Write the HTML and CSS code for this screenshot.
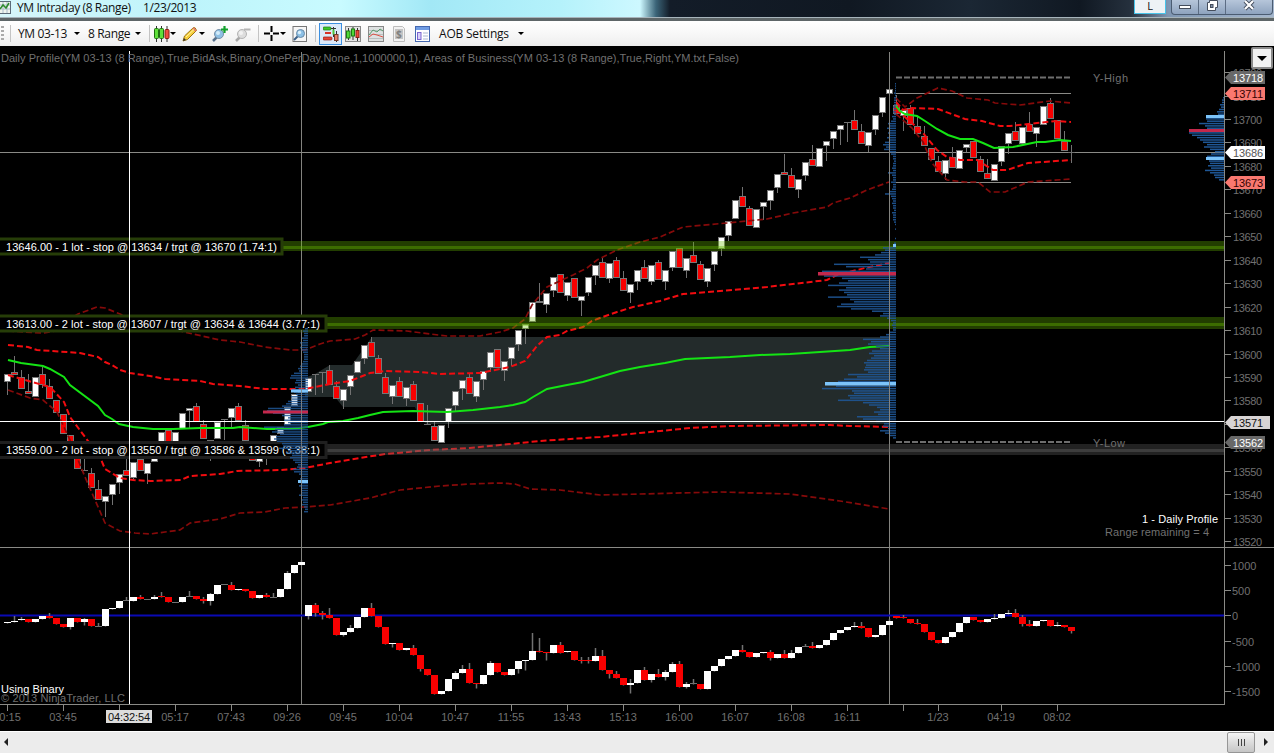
FILE: index.html
```
<!DOCTYPE html>
<html lang="en">
    <head>
        <meta charset="UTF-8">
        <title>YM Intraday (8 Range) 1/23/2013</title>
        <link rel="stylesheet" href="styles.css">
    </head>
    <body>
        <div class="titlebar">
            <svg class="app-icon" width="12" height="14" viewBox="0 0 12 14">
                <rect x="-3" y="1.5" width="13.500" height="12" fill="#eef4ee" stroke="#5b6b78"/>
                <path d="M0 5h10M0 9h10M3 2v11M7 2v11" stroke="#a9bccb" fill="none"/>
                <path d="M0 9L3 5L6 8L9 3" stroke="#2c8a2c" stroke-width="1.500" fill="none"/>
            </svg>
            <span class="title-name">YM Intraday (8 Range)</span>
            <span class="title-date">1/23/2013</span>
            <div class="link-btn">L</div>
            <div class="window-btns">
                <span class="win-min"><svg width="14" height="14" viewBox="0 0 14 14"><rect x="1.500" y="5.500" width="11" height="3" fill="#fff" stroke="#444d5c"/></svg></span>
                <span class="win-max"><svg width="14" height="14" viewBox="0 0 14 14"><path d="M4.500 0.500h8v7h-2v3h-8v-8h2z" fill="#fff" stroke="#444d5c"/><rect x="5.500" y="4.500" width="2.500" height="3" fill="#8090a8" stroke="#444d5c"/></svg></span>
                <span class="win-close"><svg width="14" height="14" viewBox="0 0 14 14"><path d="M3 1L11 9M11 1L3 9" stroke="#444d5c" stroke-width="4"/><path d="M3 1L11 9M11 1L3 9" stroke="#fff" stroke-width="2.200"/></svg></span>
            </div>
        </div>

        <div class="toolbar">
            <span class="grip"></span>
            <span class="sep"></span>
            <span class="menu instrument">YM 03-13</span><i class="arrow"></i>
            <span class="menu range">8 Range</span><i class="arrow"></i>
            <span class="sep sep-b"></span>
            <svg class="ic ic-candles" viewBox="0 0 16 16"><path d="M2.500 0v16M7.500 0v16M13 0v16" stroke="#333"/><rect x="0.500" y="2.500" width="4" height="10" rx="1" fill="#5fe03a" stroke="#1d6e10"/><rect x="5.500" y="2.500" width="4" height="10" rx="1" fill="#5fe03a" stroke="#1d6e10"/><rect x="11" y="3.500" width="4" height="9" rx="1" fill="#f05040" stroke="#8a1c14"/></svg>
            <i class="arrow"></i>
            <svg class="ic ic-pencil" viewBox="0 0 16 16"><path d="M1 15L2.500 10L11.500 1.500Q13.500 1 14.500 4.500L5.500 13.500Z" fill="#f6cf3c" stroke="#9a7414"/><path d="M11 2L14 5" stroke="#e27a6a" stroke-width="2"/><path d="M4 11L12 3.500" stroke="#fff3a8"/><path d="M1 15L2 12L4 14Z" fill="#333"/></svg>
            <i class="arrow"></i>
            <svg class="ic ic-zoomin" viewBox="0 0 16 16"><path d="M1 15L5 11" stroke="#56708c" stroke-width="2.500"/><circle cx="7" cy="8" r="4.500" fill="#8fc0e4" stroke="#7790a8"/><circle cx="6" cy="7" r="2" fill="#d2ebfa"/><path d="M12.500 0v7M9 3.500h7" stroke="#12a02c" stroke-width="2.200"/></svg>
            <svg class="ic ic-zoomout" viewBox="0 0 16 16"><path d="M1 15L5 11" stroke="#a8a8a8" stroke-width="2.500"/><circle cx="7" cy="8" r="4.500" fill="#ddd" stroke="#b4b4b4"/><circle cx="6" cy="7" r="2" fill="#f2f2f2"/><path d="M9 3.500h6.500" stroke="#b4b4b4" stroke-width="2"/></svg>
            <span class="sep sep-c"></span>
            <svg class="ic ic-cross" viewBox="0 0 16 16"><path d="M7.500 0v6M7.500 9v6M0 7.500h6M9 7.500h6" stroke="#000" stroke-width="2"/></svg>
            <i class="arrow"></i>
            <svg class="ic ic-find" viewBox="0 0 16 16"><rect x="1" y="0.500" width="13.500" height="15" fill="#f6f6f6" stroke="#777"/><path d="M2 14L6 10" stroke="#3a5f88" stroke-width="2"/><circle cx="8.500" cy="7.500" r="4" fill="#8cc0e6" stroke="#6a8aa6"/><circle cx="7.500" cy="6.500" r="1.700" fill="#d8effc"/></svg>
            <span class="sep sep-d"></span>
            <span class="tool-active"><svg class="ic" viewBox="0 0 16 16"><rect x="0" y="1" width="8" height="3" rx="1" fill="#3cc828" stroke="#1c7a12" stroke-width=".7"/><rect x="2" y="6" width="6" height="2" fill="#d83428"/><rect x="0" y="11" width="9" height="3" rx="1" fill="#e8463a" stroke="#902018" stroke-width=".7"/><path d="M10.500 1v10M13.500 5v11M8 2.500h5" stroke="#333"/><rect x="11.500" y="8.500" width="3.500" height="6" fill="#e8806a" stroke="#7a3a28"/><rect x="9.500" y="3.500" width="2" height="5" fill="#4cc83a"/></svg></span>
            <svg class="ic ic-bars" viewBox="0 0 16 16"><rect x=".5" y=".5" width="15" height="15" fill="#e4e4e4" stroke="#888"/><path d="M3.500 2v12M8 1v13M12.500 2v13" stroke="#333"/><rect x="1.500" y="5" width="3.500" height="7" fill="#50d838" stroke="#1c7a12"/><rect x="6.500" y="3" width="3" height="7" fill="#50d838" stroke="#1c7a12"/><rect x="11" y="4.500" width="3" height="7" fill="#ee4a3c" stroke="#902018"/></svg>
            <svg class="ic ic-line" viewBox="0 0 16 16"><rect x=".5" y=".5" width="15" height="15" fill="#dde1e1" stroke="#888"/><path d="M1 4.500h14M1 8.500h14M1 12.500h14" stroke="#b9c0c0"/><path d="M1 9L5 4L9 6L12 3L15 5" stroke="#5a9a6c" fill="none"/><path d="M1 11L5 8L9 9L15 11" stroke="#dc5044" fill="none"/></svg>
            <svg class="ic ic-money" viewBox="0 0 16 16"><path d="M2.500 .5h9l2 2v13h-11z" fill="#f2f2f2" stroke="#bcbcbc"/><rect x="4" y="3" width="8" height="10" fill="#c4c4c4"/><text x="5" y="12" font-size="10" font-weight="bold" fill="#808080">$</text></svg>
            <svg class="ic ic-props" viewBox="0 0 16 16"><rect x=".5" y=".5" width="14" height="15" fill="#fff" stroke="#4468b0"/><rect x="1" y="1" width="13" height="3" fill="#6f9ce4"/><rect x="2.500" y="6.500" width="3.500" height="7" fill="#d8d0fa" stroke="#7c66d0"/><path d="M8 7h5M8 10h5M8 13h5" stroke="#aab8d0"/></svg>
            <span class="menu aob">AOB Settings</span><i class="arrow arrow-last"></i>
        </div>

        <div class="chart-panel">
            <svg id="chart" width="1274" height="685" viewBox="0 46 1274 685"></svg>
            <button class="chart-drop"><i class="arrow"></i></button>
        </div>

        <div class="scrollbar">
            <span class="scroll-left"></span>
            <span class="thumb"><i></i><i></i><i></i></span>
            <span class="scroll-right"></span>
        </div>

        <script src="script.js"></script>
    </body>
</html>
```
FILE: styles.css
```
body {
    margin: 0;
    width: 1274px;
    height: 753px;
    overflow: hidden;
    background: #000;
    font-family: "Open Sans", "Noto Sans", sans-serif;
    font-size: 12px;
    color: #111;
    display: flex;
    flex-direction: column;
}
.titlebar {
    height: 17px;
    display: flex;
    align-items: flex-start;
    background: linear-gradient(90deg, #d6f6fa 0, #bdf4fb 190px, #c9fbff 340px, #a2e8f6 430px, #b5f2fb 560px, #cdf8ff 640px, #3b6478 656px, #131c28 670px, #101822 850px, #1b2734 970px, #101822 1080px, #25303d 1130px, #7f96b2 1168px, #a4b6cd 1274px);
    border-bottom: 1px solid #a7b4bb;
}
.app-icon {
    margin-top: 0;
    width: 12px;
}
.title-name {
    margin-left: 5px;
    width: 121px;
    line-height: 16px;
    letter-spacing: -0.4px;
    white-space: nowrap;
}
.title-date {
    margin-left: 5px;
    width: 60px;
    line-height: 16px;
    letter-spacing: -0.4px;
}
.link-btn {
    margin-left: 931px;
    width: 30px;
    height: 13px;
    background: #eef2f5;
    border: 1px solid #48c4ea;
    border-top: none;
    font-size: 11px;
    line-height: 11px;
    text-align: center;
}
.window-btns {
    margin-left: 5px;
    width: 100px;
    height: 14px;
    display: flex;
    background: linear-gradient(#b6c6da, #8ea3be);
    border: 1px solid #4b5c72;
    border-top: none;
    border-radius: 0 0 4px 4px;
}
.window-btns span {
    height: 14px;
    text-align: center;
    border-right: 1px solid #5c6d84;
}
.window-btns svg {
    display: block;
    margin: 0 auto;
}
.window-btns .win-min { width: 26px; }
.window-btns .win-max { width: 27px; }
.window-btns .win-close {
    width: 46px;
    border-right: none;
}
.toolbar {
    height: 25px;
    border-top: 3px solid #5e6668;
    display: flex;
    align-items: center;
    background: linear-gradient(#fff, #f6f6f6 60%, #ededed);
    white-space: nowrap;
}
.toolbar > * {
    flex-shrink: 0;
}
.grip {
    width: 3px;
    height: 16px;
    margin-left: 1px;
    background: repeating-linear-gradient(#aaa 0 2px, transparent 2px 4px);
}
.sep {
    width: 1px;
    height: 17px;
    margin-left: 6px;
    background: #c4c4c4;
}
.sep-b { margin-left: 8px; }
.sep-c { margin-left: 7px; }
.sep-d { margin-left: 7px; }
.menu {
    letter-spacing: -0.35px;
}
.instrument {
    margin-left: 7px;
    width: 52px;
}
.range {
    margin-left: 8px;
    width: 43px;
}
.aob {
    margin-left: 8px;
    width: 70px;
    letter-spacing: -0.2px;
}
.arrow {
    width: 0;
    height: 0;
    margin-left: 4px;
    border: 3px solid transparent;
    border-top-color: #000;
    border-bottom: none;
}
.range + .arrow { margin-left: 4px; }
.arrow-last { margin-left: 9px; }
.ic {
    width: 16px;
    height: 16px;
}
.ic-candles { margin-left: 4px; }
.ic-candles + .arrow { margin-left: 0; }
.ic-pencil { margin-left: 6px; }
.ic-pencil + .arrow { margin-left: 1px; }
.ic-zoomin { margin-left: 7px; }
.ic-zoomout { margin-left: 7px; }
.ic-cross { margin-left: 5px; }
.ic-cross + .arrow { margin-left: 0; }
.ic-find { margin-left: 6px; }
.tool-active {
    width: 21px;
    height: 20px;
    margin-left: 3px;
    display: flex;
    align-items: center;
    justify-content: center;
    border: 1px solid #3c8fe0;
    background: #dceafa;
}
.ic-bars { margin-left: 3px; }
.ic-line { margin-left: 7px; }
.ic-money { margin-left: 7px; }
.ic-props { margin-left: 8px; }

/* Chart */
.chart-panel {
    position: relative;
    height: 685px;
}
#chart {
    display: block;
    font-family: "Liberation Sans", Arial, sans-serif;
    font-size: 11px;
}
.chart-drop {
    position: absolute;
    top: 1px;
    right: 1px;
    width: 22px;
    height: 22px;
    padding: 0;
    display: flex;
    align-items: center;
    justify-content: center;
    background: #f2f2f2;
    border: 2px solid #8a8a8a;
    border-radius: 2px;
}
.chart-drop .arrow {
    margin: 0;
    border-width: 5px 5px 0;
}
.axis { stroke: #8a8a86; }
.vline { stroke: #83837f; }
.zero { stroke: #0a0ab4; stroke-width: 2; }
.cross { stroke: #fff; }
.dim { fill: #707070; }
.light { fill: #fff; }
.area { fill: #232b2b; }
.avg { stroke: #14e414; stroke-width: 2; fill: none; }
.band { stroke: #f20c10; stroke-width: 2; stroke-dasharray: 6 3; fill: none; }
.band-far { stroke: #860a0a; stroke-width: 1.7; stroke-dasharray: 6 3; fill: none; }
.ylevel { stroke: #6e6e6e; stroke-width: 2; stroke-dasharray: 6 2; }
.wick { stroke: #727272; }
.up { fill: #fff; }
.down { fill: #f80000; }
.body { stroke: #777; }
.vol { fill: #1f5796; }
.poc { fill: #c4284c; }
.peak { fill: #7cc4fa; }

.scrollbar {
    height: 22px;
    display: flex;
    align-items: center;
    background: #ececec;
    box-shadow: inset 0 1px #fff;
}
.scroll-left {
    margin-left: 4px;
    border: 4px solid transparent;
    border-right-color: #222;
    border-left: none;
}
.thumb {
    margin-left: 1219px;
    width: 26px;
    height: 19px;
    display: flex;
    align-items: center;
    justify-content: center;
    gap: 2px;
    border: 1px solid #969696;
    border-radius: 2px;
    background: linear-gradient(#f4f4f4, #dcdcdc 50%, #c6c6c6);
}
.thumb i {
    width: 1px;
    height: 7px;
    background: #444;
}
.scroll-right {
    margin-left: 9px;
    border: 4px solid transparent;
    border-left-color: #222;
    border-right: none;
}
```
FILE: script.js
```
const svg = document.getElementById("chart");
const NS = "http://www.w3.org/2000/svg";

function add(tag, attrs, text) {
    const el = document.createElementNS(NS, tag);
    for (const key in attrs) el.setAttribute(key, attrs[key]);
    if (text !== undefined) el.textContent = text;
    svg.appendChild(el);
    return el;
}
function line(x1, y1, x2, y2, cls) {
    add("line", { x1, y1, x2, y2, class: cls });
}
function rect(x, y, width, height, attrs) {
    add("rect", Object.assign({ x, y, width, height }, attrs));
}
function text(x, y, str, cls, length) {
    const attrs = { x, y, class: cls };
    if (length) attrs.textLength = length;
    return add("text", attrs, str);
}
function poly(points, cls) {
    add("polyline", { points, class: cls });
}

// bar: colour, top, bottom, high, low (w = up, r = down, t = flat)
const price = `w 374 381 374 394;r 372 374 356 374;r 377 388 370 388;r 391 393 374 393;w 377 396;r 374 384 367 387;r 386 398 379 398;r 400 412;r 414 433;r 435 448
r 448 468;t 470 470 455 470;r 473 487 468 487;r 489 499 480 499;w 496 501 496 516;w 484 494 484 504;w 474 482 474 493;r 470 475 456 475;w 462 477 462 480;r 459 470 456 470
w 463 473 463 483;w 452 461;w 432 445;r 430 444;w 432 441;w 413 428;w 408 410 408 427;r 406 421 403 421;r 424 438 420 438;t 440 440 440 460
w 422 438;t 419 419 419 439;w 408 417 408 427;r 406 420 403 420;r 425 440 420 440;r 447 460;w 455 461 455 466;t 450 450 450 464;w 435 445;w 427 433
w 407 424;w 394 405;t 392 392;w 378 391;t 374 374 374 394;t 372 372 372 392;r 370 384 365 384;r 386 398 381 398;w 389 400 389 408;w 375 386 375 394
w 361 372;w 345 358 345 363;r 342 356 337 356;r 358 373 355 373;r 377 393 373 393;w 385 396 385 403;r 381 396 377 396;w 387 398 387 405;r 384 400 381 400;r 403 421
t 424 424 405 424;r 426 440 422 440;w 425 442;w 408 421 408 427;w 391 405 391 410;w 380 388 380 399;r 377 393 373 393;w 381 396 381 401;w 371 379 371 389;w 352 367 352 371
r 349 367;w 361 370 361 380;w 347 358 347 365;w 330 344 330 350;w 324 328 324 343;w 302 321;r 301 302 283 302;w 293 304 293 312;w 277 290 277 296;r 274 292
w 282 295 282 300;r 278 297;w 296 300 296 315;w 277 292 277 295;w 265 275 265 284;r 262 277 257 277;w 263 278 263 282;r 260 277 257 277;r 278 290 271 290;w 284 292 284 302
w 270 281 270 289;r 267 278 260 278;w 265 281 265 284;r 262 279 260 279;w 270 281 270 289;w 251 267 251 270;r 248 267;w 258 270 258 277;r 255 262 242 262;r 264 279 261 279
w 268 281 268 286;w 251 264 251 270;w 237 248 237 255;w 221 235 221 240;w 200 218;r 196 206 187 206;r 208 225 206 225;w 209 227;w 202 206 202 219;w 190 200 190 209
w 174 187 174 192;r 172 174 154 174;r 175 187 168 187;w 179 189 179 197;w 162 175 162 180;r 159 165 145 165;w 148 166;w 141 145 141 160;w 131 138 131 148;w 125 129 125 144
t 122 122 122 141;r 120 129 110 129;r 131 143 124 143;w 132 145 132 151;w 115 129 115 134;w 97 112 97 116;w 89 93;r 105 113 95 113;w 110 115 110 130;r 108 124 105 124
r 126 133 116 133;r 136 145 126 145;r 148 159;r 161 171 156 171;w 160 173 160 179;r 157 167 147 167;w 150 168;w 144 147 144 151;r 141 157;r 159 171 156 171
r 173 178 159 178;w 164 180;w 146 161 146 165;w 133 143 133 153;r 131 140 122 140;w 127 143;r 124 131 112 131;w 127 133 127 146;w 106 124;r 103 118 98 118
r 120 138;r 141 150 131 150;t 152 152 145 162`;

const delta = `w 622 623;w 621 622 616 622;w 619 620 617 620;r 619 622;w 619 622;w 616 619;r 616 618 613 618;r 618 624;r 624 627;w 618 627 618 629
r 618 622;w 619 622 618 625;r 619 626;t 626 626 623 626;w 609 626;w 608 609;w 601 608;t 600 600 597 600;w 597 601;r 597 599 595 599
t 599 599;w 597 599 595 599;r 596 597 592 597;r 597 602;t 602 602;w 597 602;t 596 596 591 596;r 596 599;r 599 601 597 603;w 594 601 593 605
w 585 594;t 584 584;r 585 590 582 590;w 589 590;r 589 591;r 591 598;w 595 598;r 595 597 593 597;t 597 597 593 597;w 589 597
w 573 589 571 589;w 565 573;w 562 565 560 565;w 605 616 605 619;r 605 613 603 616;r 613 615 611 619;r 615 618 608 618;r 618 635;w 632 635 632 636;w 628 632 625 632
w 617 628;w 608 617;r 608 616 603 616;r 616 627;r 627 644;w 643 644 643 647;r 643 650;w 648 650;r 648 655 645 655;r 655 669 655 671
r 669 675;r 675 694;w 691 694;w 679 691;w 673 679 671 679;w 669 673 665 673;r 669 683 663 683;r 683 684 683 688;w 675 684;w 663 675 661 675
r 663 672;r 672 675;w 669 675;w 661 669 661 673;w 660 661 660 670;w 651 660 633 660;r 651 652 638 652;r 652 653 652 660;w 645 653;r 645 653 642 653
w 651 652;r 651 660;r 660 661 657 663;r 660 661 657 663;w 656 661 648 661;r 656 670 650 670;r 670 674 670 678;r 674 678 671 678;r 678 685;w 683 685 679 693
w 670 683;r 670 680 667 680;w 674 680 674 682;r 674 677 669 677;w 672 677 670 680;w 664 672 662 672;r 664 687 661 687;w 684 687 682 688;t 683 683 679 684;r 684 689
w 671 689;w 666 671;w 659 666;w 656 659;w 650 656;r 650 652 645 652;r 652 657;w 653 657;w 652 653;r 652 658 650 660
w 654 658;r 654 658 650 658;w 653 658 650 658;w 647 653;t 646 646 644 646;r 646 648 642 648;w 645 648;w 640 645;w 633 640;w 630 633
w 627 630;w 626 627 622 627;r 626 628 622 628;r 628 637;w 635 637;w 625 635;w 621 625 619 625;r 616 618;r 617 618 615 618;r 619 623
r 623 624 619 624;r 624 632;r 632 640;r 640 643;w 637 643;w 632 637;w 623 632;w 617 623;r 617 620;r 620 622
w 619 622;w 618 619 614 619;w 614 618;w 613 614 610 614;r 613 617 609 617;r 617 624 615 626;r 624 626 620 626;w 621 626;w 620 621;r 620 626
w 625 626 622 626;r 625 627;r 627 631 627 633`;

function parse(str) {
    return str.split(/[;\n]/).map(item => {
        const p = item.trim().split(" ");
        return { kind: p[0], top: +p[1], bottom: +p[2], high: +(p[3] || p[1]), low: +(p[4] || p[2]) };
    });
}

// Initial balance area
add("path", { class: "area", d: "M305 378L315 374L330 365H352L372 337H889V424H427L420 419L415 407H343L335 397H305Z" });

// Gridlines and session separators
line(301.5, 52, 301.5, 704, "vline");
line(889.5, 52, 889.5, 704, "vline");
line(0, 547.5, 1274, 547.5, "axis");
line(0, 615.5, 1224, 615.5, "zero");
line(896, 93.5, 1071, 93.5, "axis");
line(896, 182.5, 1071, 182.5, "axis");
line(0, 152.5, 1224, 152.5, "axis");
line(896, 77.5, 1071, 77.5, "ylevel");
line(896, 442, 1071, 442, "ylevel");

parse(price).forEach((b, i) => {
    const x = 7.5 + i * 7;
    line(x, b.high, x, b.low + 1, "wick");
    if (b.kind === "t") {
        line(x - 3.5, b.top + 0.5, x + 3.5, b.top + 0.5, "wick");
    } else {
        rect(x - 3, b.top + 0.5, 6, b.bottom - b.top, { class: "body " + (b.kind === "w" ? "up" : "down") });
    }
});
parse(delta).forEach((b, i) => {
    const x = 7.5 + i * 7;
    add("line", { x1: x, y1: b.high, x2: x, y2: b.low + 0.5, class: "wick", "stroke-width": 1.5 });
    if (b.kind === "t") {
        line(x - 3.5, b.top + 0.5, x + 3.5, b.top + 0.5, "wick");
    } else {
        rect(x - 3.5, b.top, 7, b.bottom - b.top, { class: b.kind === "w" ? "up" : "down" });
    }
});

// Deviation bands
poly("8,331 43,333 55,331 65,322 78,314 97,307 105,308 115,312 130,318 180,331 193,334 220,340 240,342 265,347 290,350 305,350 320,344 330,341 355,339 365,335 373,330 407,331 430,334 447,336 480,336 500,332 513,328 525,319 532,305 547,287 560,281 573,275 587,268 597,260 617,250 640,242 660,237 683,227 727,223 767,219 793,213 827,207 833,203 850,198 867,190 889,182", "band-far");
poly("8,390 30,398 43,400 57,412 70,440 85,477 95,500 105,523 120,531 135,533 150,534 165,532 180,530 190,523 220,519 240,513 265,512 285,508 305,507 330,505 370,498 400,490 440,486 470,484 500,483 515,484 530,489 560,490 600,495 640,494 720,492 790,494 840,501 889,509", "band-far");
poly("8,345 28,347 37,350 80,353 98,357 105,362 112,365 120,370 130,373 150,376 165,379 200,381 213,384 240,386 265,389 305,389 330,384 350,381 370,373 385,371 420,372 440,374 480,373 510,367 525,361 537,346 547,337 560,335 567,331 583,327 592,321 600,318 617,312 633,307 660,301 683,294 720,291 767,287 827,280 837,275 865,268 889,263", "band");
poly("8,375 25,380 50,387 64,402 70,417 88,441 97,450 105,469 120,478 133,480 150,481 181,480 190,476 220,474 237,471 280,470 305,468 330,463 360,458 385,454 430,450 470,448 500,445 540,441 600,437 640,433 690,428 730,426 830,425 850,426 889,427", "band");
poly("896,98 905,107 917,98 938,88 952,91 967,98 988,100 995,103 1020,105 1050,101 1071,103", "band-far");
poly("896,114 912,128 923,142 932,163 947,180 965,182 978,182 990,192 1005,192 1028,182 1071,179", "band-far");
poly("896,102 903,110 912,108 938,109 965,119 982,121 1000,126 1010,126 1037,123 1057,121 1071,122", "band");
poly("896,110 905,117 923,133 937,150 947,157 960,160 977,160 993,170 1007,170 1028,163 1071,160", "band");
poly("8,360 21,363 43,366 50,369 64,377 70,385 98,406 105,415 112,419 119,424 133,427 153,429 173,429 200,428 233,428 240,427 267,429 290,429 308,427 323,424 328,422 343,421 358,418 370,415 383,412 413,411 447,412 473,410 500,407 513,405 525,402 533,397 547,389 567,385 583,382 600,377 620,371 640,367 665,363 685,359 730,357 760,355 790,354 820,352 850,350 870,347 889,346", "avg");
poly("896,106 900,111 905,114 917,116 925,121 937,129 948,135 960,139 973,139 983,143 994,148 1013,147 1037,142 1045,142 1060,140 1071,141", "avg");

// Areas of business
function zone(y, h, innerY, innerH, color) {
    rect(0, y, 1224, h, { fill: color, "fill-opacity": 0.33 });
    rect(0, innerY, 1224, innerH, { fill: color, "fill-opacity": 0.38 });
}
zone(241, 10, 246, 3, "#66bb00");
zone(317, 12, 323, 3, "#66bb00");
zone(444, 11, 449, 3, "#686868");

function zoneLabel(y, width, str, color, length) {
    rect(-2, y, width, 15, { fill: "#000", stroke: color, "stroke-width": 3 });
    text(6, y + 11.5, str, "light", length);
}
zoneLabel(239, 284, "13646.00 - 1 lot - stop @ 13634 / trgt @ 13670 (1.74:1)", "#263d08", 271);
zoneLabel(316, 328, "13613.00 - 2 lot - stop @ 13607 / trgt @ 13634 & 13644 (3.77:1)", "#263d08", 314);
zoneLabel(442.5, 328, "13559.00 - 2 lot - stop @ 13550 / trgt @ 13586 & 13599 (3.38:1)", "#1f1f1f", 314);

// Volume profiles, one row per point of price
function profile(right, top, rows, opacity) {
    rows.forEach((w, i) => {
        rect(right - w, top + i * 2.345, w, 1.5, { class: "vol", "fill-opacity": opacity });
    });
}
profile(308, 328, [3, 5, 4, 4, 6, 5, 8, 7, 8, 7, 5, 4, 4, 4, 5, 6, 8, 10, 9, 14, 17, 18, 12, 13, 10, 13, 16, 14, 12, 17, 16, 20, 22, 26, 40, 41, 35, 26, 20, 24, 20, 24, 44, 33, 36, 28, 32, 34, 31, 26, 25, 29, 20, 22, 16, 18, 15, 13, 10, 11, 15, 14, 9, 7, 8, 10, 7, 9, 6, 6, 7, 9, 5, 7, 5, 6, 4, 3, 4], 0.85);
profile(896, 83, [1, 1, 1, 1, 2, 1, 2, 2, 2, 2, 3, 2, 3, 2, 4, 3, 5, 8, 6, 9, 7, 8, 6, 9, 7, 11, 13, 10, 12, 6, 5, 3, 3, 2, 3, 3, 4, 3, 8, 4, 3, 3, 5, 3, 3, 4, 7, 11, 5, 4, 3, 4, 3, 3, 2, 4, 3, 3, 3, 2, 1, 0, 1, 0, 0, 0, 1, 0, 2, 3, 13, 11, 15, 21, 36, 28, 26, 62, 50, 30, 74, 76, 72, 54, 48, 57, 68, 50, 57, 52, 49, 68, 46, 42, 55, 59, 45, 24, 13, 16, 9, 5, 3, 4, 3, 3, 7, 10, 16, 33, 25, 28, 20, 16, 24, 27, 22, 25, 29, 32, 30, 31, 32, 28, 48, 39, 52, 58, 66, 60, 74, 44, 42, 48, 46, 58, 33, 27, 19, 16, 22, 18, 39, 33, 20, 12, 13, 8, 16, 11, 6, 3], 0.9);
profile(1224, 97, [1, 2, 2, 4, 3, 5, 7, 6, 9, 18, 17, 25, 19, 17, 27, 35, 32, 27, 24, 21, 17, 20, 14, 9, 13, 17, 17, 15, 14, 16, 13, 19, 14, 10, 9, 5], 1);
rect(263, 410.5, 45, 3, { class: "poc" });
rect(291, 389.5, 17, 3, { class: "peak" });
rect(298, 480, 10, 3, { class: "peak" });
rect(818, 272, 78, 3.5, { class: "poc" });
rect(825, 382, 71, 3.5, { class: "peak" });
rect(893, 244, 3, 3, { class: "peak" });
rect(1189, 129, 35, 3, { class: "poc" });
rect(1206, 115, 18, 3, { class: "peak" });
rect(1206, 157, 18, 3, { class: "peak" });
add("line", { x1: 301.5, y1: 330, x2: 301.5, y2: 513, class: "vline", "stroke-opacity": 0.8 });
line(889.5, 52, 889.5, 440, "vline");

// Crosshair
line(129.5, 51, 129.5, 704, "cross");
line(0, 421.5, 1224, 421.5, "cross");

// Axes
line(1224.5, 51, 1224.5, 704, "axis");
line(0, 704.5, 1225, 704.5, "axis");
for (let p = 13520; p <= 13720; p += 10) {
    const y = Math.round(119 + (13700 - p) * 2.345);
    line(1225, y + 0.5, 1231, y + 0.5, "axis");
    text(1233, y + 4.5, p, "dim", 29);
}
[[1000, 565], [500, 590], [0, 615], [-500, 641], [-1000, 666], [-1500, 691]].forEach(([v, y]) => {
    line(1225, y + 0.5, 1231, y + 0.5, "axis");
    text(1232, y + 5, v, "dim");
});

const times = [[7, "00:15"], [63, "03:45"], [119, ""], [175, "05:17"], [231, "07:43"], [287, "09:26"], [343, "09:45"], [399, "10:04"], [455, "10:47"], [511, "11:55"], [567, "13:43"], [623, "15:13"], [679, "16:00"], [735, "16:07"], [791, "16:08"], [847, "16:11"], [903, ""], [938, "1/23"], [1001, "04:19"], [1057, "08:02"]];
times.forEach(([x, label]) => {
    line(x + 0.5, 705, x + 0.5, 711, "axis");
    if (label) text(x, 721, label, "dim").setAttribute("text-anchor", "middle");
});
rect(106, 710, 46, 13, { fill: "#dcdcdc" });
add("text", { x: 108, y: 721, fill: "#111", textLength: 42 }, "04:32:54");

function tag(y, label, fill, color, right = 1265) {
    add("path", { d: `M1225 ${y + 6.5}L1231 ${y}H${right}V${y + 13}H1231Z`, fill });
    add("text", { x: 1233, y: y + 10.5, fill: color, textLength: 30 }, label);
}
tag(71, "13718", "#686868", "#fff");
tag(87, "13711", "#f97870", "#300");
tag(146, "13686", "#fff", "#555");
tag(176, "13673", "#f97870", "#300");
tag(416, "13571", "#d8d4d4", "#111", 1270);
tag(436, "13562", "#686868", "#fff");

// Captions
text(1, 62, "Daily Profile(YM 03-13 (8 Range),True,BidAsk,Binary,OnePerDay,None,1,1000000,1), Areas of Business(YM 03-13 (8 Range),True,Right,YM.txt,False)", "dim", 738);
text(1093, 82, "Y-High", "dim", 35);
text(1093, 447, "Y-Low", "dim", 32);
text(1142, 523, "1 - Daily Profile", "light", 76);
text(1105, 536, "Range remaining = 4", "dim", 104);
text(1, 693, "Using Binary", "light", 63);
text(1, 702, "© 2013 NinjaTrader, LLC", "dim", 124);
```
